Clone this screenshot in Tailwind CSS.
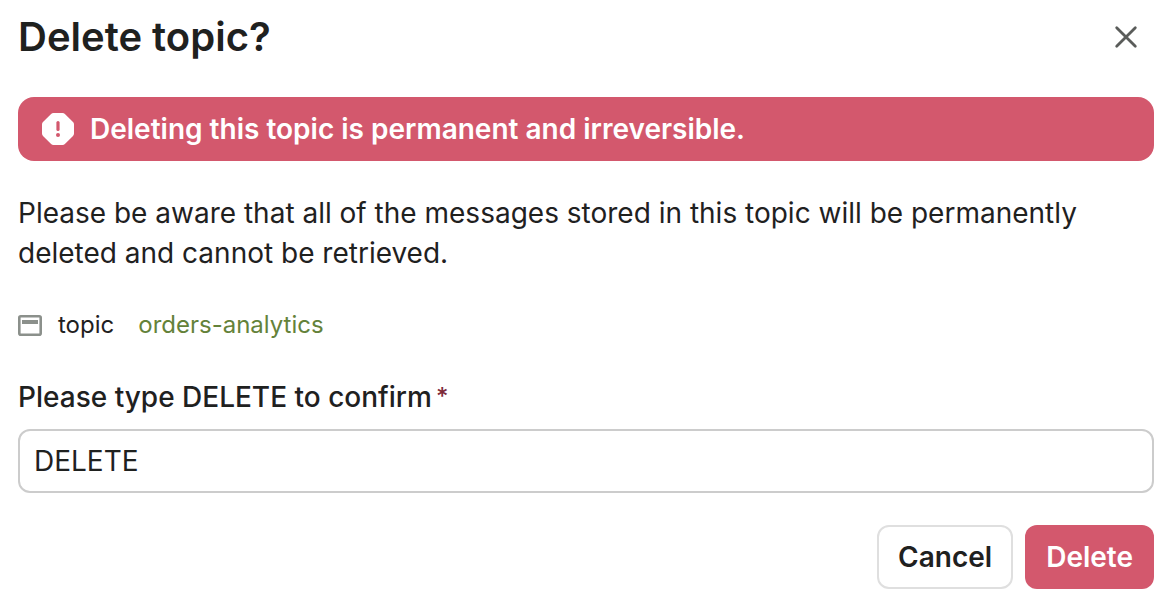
<!DOCTYPE html>
<html lang="en">
<head>
<meta charset="utf-8">
<meta name="viewport" content="width=device-width, initial-scale=1">
<title>Delete topic?</title>
<script src="https://cdn.jsdelivr.net/npm/@tailwindcss/browser@4"></script>
</head>
<body class="bg-white text-[#1f211f] font-['Inter',sans-serif]">
<main role="dialog" aria-labelledby="title" class="pl-[18px] pr-4 pt-3">
  <header class="flex items-center justify-between pr-4">
    <h1 id="title" class="text-[40px] leading-[50px] font-semibold">Delete topic?</h1>
    <button type="button" aria-label="Close" class="size-6 text-[#5a5c5a]">
      <svg viewBox="0 0 24 24" class="size-6" fill="none" stroke="currentColor" stroke-width="2.8" stroke-linecap="round"><path d="M2.700 2.700 21.300 21.300M21.300 2.700 2.700 21.300"/></svg>
    </button>
  </header>
  <div role="alert" class="mt-[35px] flex h-16 items-center gap-4 rounded-2xl bg-[#d3586d] px-6 text-white">
    <svg viewBox="0 0 32 32" class="size-8 shrink-0"><path fill="#fff" d="M11.500 0H20.500Q21.900 0 22.900 1L31 9.100Q32 10.100 32 11.500V20.500Q32 21.900 31 22.900L22.900 31Q21.900 32 20.500 32H11.500Q10.100 32 9.100 31L1 22.900Q0 21.900 0 20.500V11.500Q0 10.100 1 9.100L9.100 1Q10.100 0 11.500 0Z"/><path d="M16 9.500V16.500" stroke="#d3586d" stroke-width="3.200" stroke-linecap="round"/><circle cx="16" cy="22" r="2" fill="#d3586d"/></svg>
    <p class="text-[28px] leading-10 font-semibold">Deleting this topic is permanent and irreversible.</p>
  </div>
  <p class="mt-8 text-[28px] leading-10">Please be aware that all of the messages stored in this topic will be permanently deleted and cannot be retrieved.</p>
  <div class="mt-8 flex items-center text-2xl leading-10">
    <svg viewBox="0 0 24 21" class="mr-4 h-[21px] w-6"><rect x="1.300" y="1.300" width="21.400" height="18.400" rx="1.500" fill="none" stroke="#8b908b" stroke-width="2.600"/><path d="M4 5H20V9H4Z" fill="#8b908b"/></svg>
    <span class="mr-6">topic</span>
    <a href="#" class="text-[#64823a]">orders-analytics</a>
  </div>
  <form>
    <label for="confirm" class="mt-8 flex gap-1 text-[28px] leading-10 font-medium">Please type DELETE to confirm<span class="text-2xl leading-10 text-[#7d2a3a]">*</span></label>
    <input id="confirm" value="DELETE" class="mt-3 block h-16 w-full rounded-xl border-2 border-[#cccccc] px-3.5 text-[28px]">
    <div class="mt-8 flex justify-end gap-3 text-[28px] font-semibold">
      <button type="button" class="h-16 rounded-xl border-2 border-[#dfdfdf] px-[19px]">Cancel</button>
      <button type="submit" class="h-16 rounded-xl bg-[#d3586d] px-[21px] text-white">Delete</button>
    </div>
  </form>
</main>
</body>
</html>
